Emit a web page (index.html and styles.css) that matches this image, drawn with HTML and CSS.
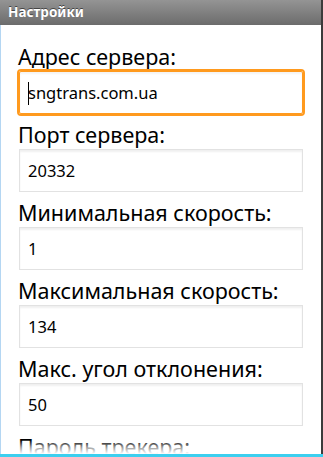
FILE: index.html
```html
<!DOCTYPE html>
<html>
<head>
<meta charset="utf-8">
<link rel="stylesheet" href="styles.css">
</head>
<body>
<div class="screen">
  <div class="main">
    <div class="titlebar">Настройки</div>
    <div class="scroll">
      <div class="form">
        <div class="label">Адрес сервера:</div>
        <div class="field focused"><span class="cursor"></span>sngtrans.com.ua</div>
        <div class="label">Порт сервера:</div>
        <div class="field">20332</div>
        <div class="label">Минимальная скорость:</div>
        <div class="field">1</div>
        <div class="label">Максимальная скорость:</div>
        <div class="field">134</div>
        <div class="label">Макс. угол отклонения:</div>
        <div class="field">50</div>
        <div class="label">Пароль трекера:</div>
        <div class="field"></div>
      </div>
      <div class="fade"></div>
    </div>
  </div>
  <div class="edge"></div>
</div>
<div class="bottomline"></div>
</body>
</html>
```
FILE: styles.css
```css
html, body {
  margin: 0;
  padding: 0;
  width: 323px;
  height: 457px;
  overflow: hidden;
  background: #ffffff;
  font-family: "Noto Sans", "Open Sans", "DejaVu Sans", sans-serif;
}
.screen {
  display: flex;
  height: 454px;
}
.main {
  flex: 1;
  display: flex;
  flex-direction: column;
  min-width: 0;
}
.edge {
  width: 2px;
  background: #3b3b3b;
}
.bottomline {
  height: 3px;
  background: #3ccfef;
}
.titlebar {
  height: 25px;
  line-height: 25px;
  padding-left: 8px;
  background: linear-gradient(#949494, #6c6c6c);
  color: #ffffff;
  font-weight: bold;
  font-size: 13.5px;
  text-shadow: 0 -1px 0 #444;
}
.scroll {
  flex: 1;
  position: relative;
  overflow: hidden;
  border-left: 1px solid #b4d6f2;
}
.form {
  padding: 11px 0 0 17px;
}
.label {
  height: 35px;
  box-sizing: border-box;
  padding-top: 6px;
  line-height: 29px;
  font-size: 21.5px;
  color: #000;
  white-space: nowrap;
}
.field {
  box-sizing: border-box;
  width: 284px;
  height: 43px;
  margin-left: 1px;
  padding-left: 8px;
  line-height: 41px;
  font-size: 16.5px;
  color: #000;
  background: #fff;
  border: 1px solid #e2e2e2;
  box-shadow: inset 0 2px 2px #f0f0f0;
}
.field.focused {
  border: 1px solid #ff9a1e;
  outline: 2px solid #ff9a1e;
  border-radius: 2px;
  box-shadow: inset 0 2px 2px #f4f4f4;
}
.cursor {
  display: inline-block;
  width: 1px;
  height: 23px;
  background: #000;
  vertical-align: middle;
  margin-right: -1px;
  position: relative;
  top: -1px;
}
.fade {
  position: absolute;
  left: 0;
  right: 0;
  bottom: 0;
  height: 14px;
  background: linear-gradient(rgba(255,255,255,0), rgba(255,255,255,0.6) 50%, #ffffff);
}
```
